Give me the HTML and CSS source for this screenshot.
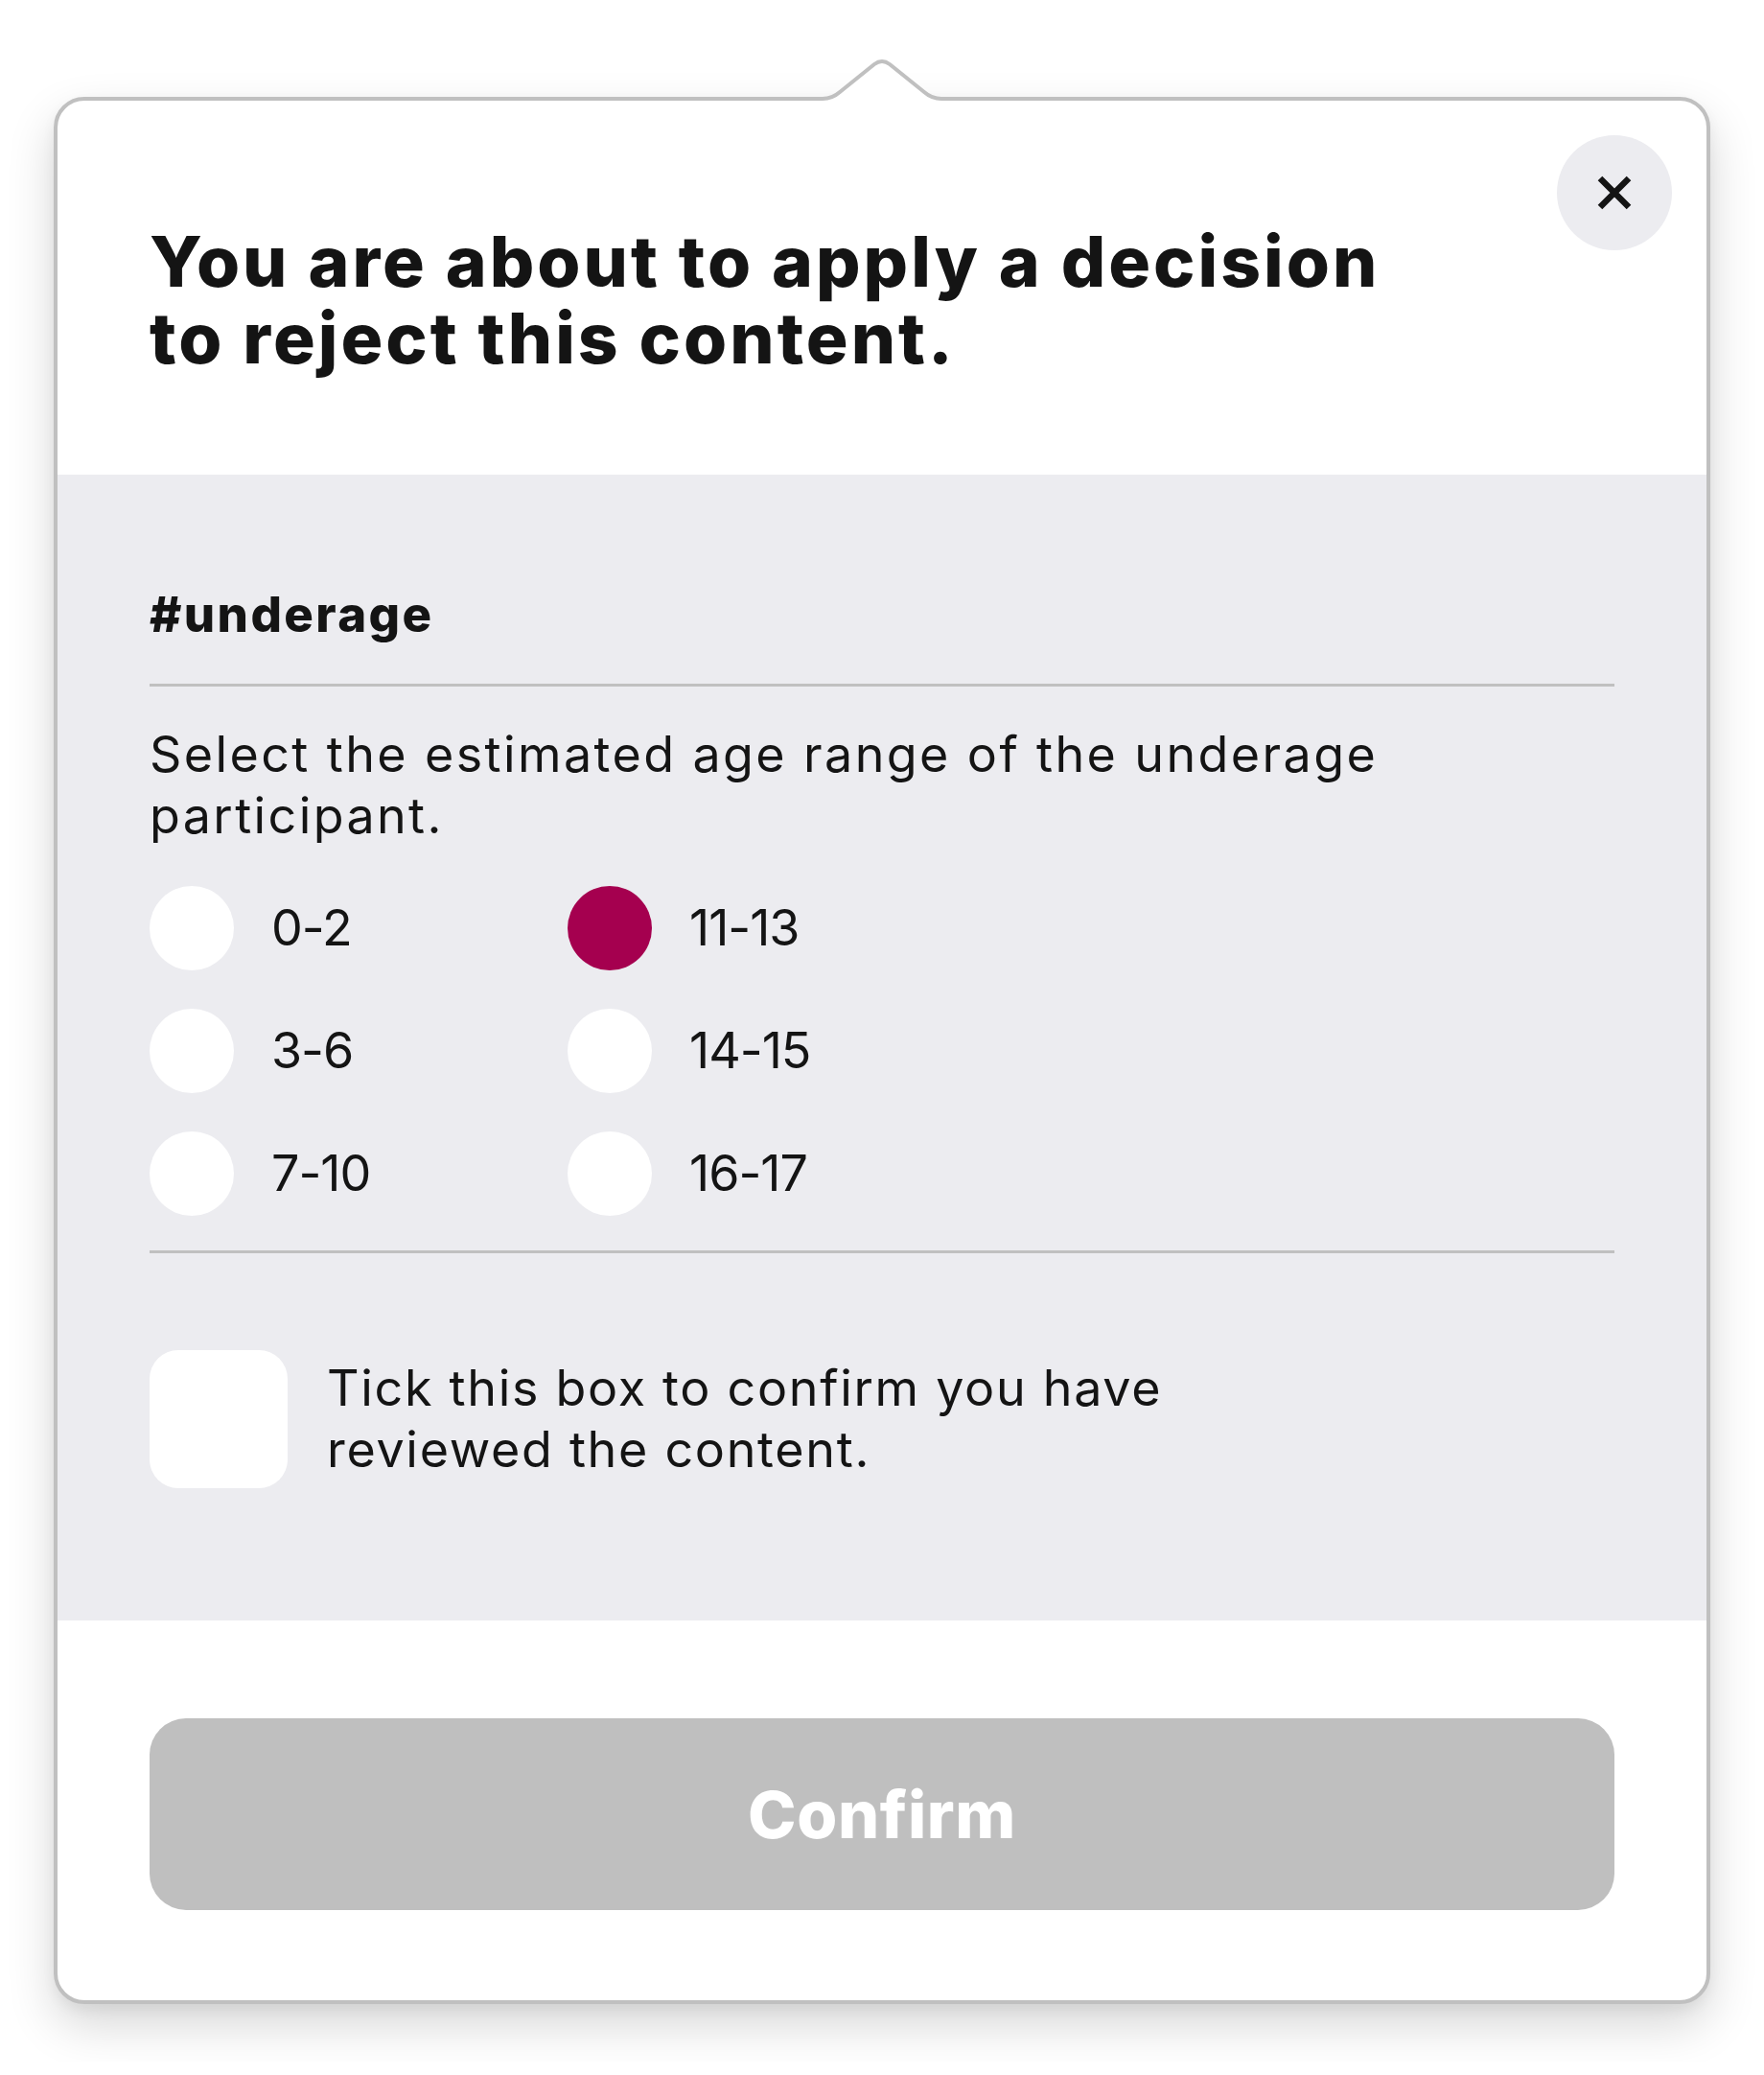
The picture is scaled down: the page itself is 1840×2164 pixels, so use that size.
FILE: index.html
```html
<!DOCTYPE html>
<html lang="en">
<head>
<meta charset="utf-8">
<title>Reject content</title>
<link rel="stylesheet" href="styles.css">
</head>
<body>
<div class="page">
  <div class="popover">
    <svg class="notch" width="140" height="50" viewBox="0 0 140 50" aria-hidden="true">
      <path class="notch-fill" d="M0 44 H8 Q18 44 26 37 L62 8 Q70 2 78 8 L114 37 Q122 44 132 44 H140 V50 H0 Z"/>
      <path class="notch-line" d="M0 44 H8 Q18 44 26 37 L62 8 Q70 2 78 8 L114 37 Q122 44 132 44 H140"/>
    </svg>
    <button class="close" type="button" aria-label="Close">
      <svg width="36" height="36" viewBox="0 0 36 36" aria-hidden="true">
        <path d="M3 3 L33 33 M33 3 L3 33"/>
      </svg>
    </button>

    <header class="head">
      <h1 class="title">You are about to apply a decision<br>to reject this content.</h1>
    </header>

    <section class="panel">
      <h2 class="tag">#underage</h2>
      <hr class="rule">
      <p class="prompt">Select the estimated age range of the underage participant.</p>
      <div class="options">
        <label class="option"><span class="dot"></span><span class="opt-text">0-2</span></label>
        <label class="option"><span class="dot"></span><span class="opt-text">3-6</span></label>
        <label class="option"><span class="dot"></span><span class="opt-text">7-10</span></label>
        <label class="option"><span class="dot dot-on"></span><span class="opt-text">11-13</span></label>
        <label class="option"><span class="dot"></span><span class="opt-text">14-15</span></label>
        <label class="option"><span class="dot"></span><span class="opt-text">16-17</span></label>
      </div>
      <hr class="rule rule-low">
      <label class="check">
        <span class="box"></span>
        <span class="check-text">Tick this box to confirm you have<br>reviewed the content.</span>
      </label>
    </section>

    <footer class="foot">
      <button class="confirm" type="button">Confirm</button>
    </footer>
  </div>
</div>
</body>
</html>
```

FILE: styles.css
```css
* {
  box-sizing: border-box;
}

html,
body {
  margin: 0;
  padding: 0;
  background: #ffffff;
}

body {
  font-family: "Inter", "Liberation Sans", sans-serif;
  color: #141414;
}

.page {
  padding: 101px 0 60px 56px;
}

.popover {
  position: relative;
  width: 1728px;
  background: #ffffff;
  border: 4px solid #c0c0c0;
  border-radius: 32px;
  box-shadow: 0 22px 50px rgba(0, 0, 0, 0.16), 0 6px 14px rgba(0, 0, 0, 0.05);
}

.notch {
  position: absolute;
  top: -46px;
  left: 50%;
  margin-left: -70px;
  display: block;
}

.notch-fill {
  fill: #ffffff;
}

.notch-line {
  fill: none;
  stroke: #c0c0c0;
  stroke-width: 4;
  stroke-linejoin: round;
}

.close {
  position: absolute;
  top: 36px;
  right: 36px;
  width: 120px;
  height: 120px;
  border: 0;
  padding: 0;
  border-radius: 50%;
  background: #ececf0;
  display: flex;
  align-items: center;
  justify-content: center;
  cursor: pointer;
}

.close svg {
  display: block;
}

.close path {
  fill: none;
  stroke: #141414;
  stroke-width: 6.5;
}

.head {
  padding: 128px 96px 102px;
  border-radius: 28px 28px 0 0;
}

.title {
  margin: 0;
  font-size: 73px;
  line-height: 80px;
  font-weight: 800;
  letter-spacing: 3px;
}

.panel {
  background: #ececf0;
  padding: 114px 96px 138px;
}

.tag {
  margin: 0;
  font-size: 51px;
  line-height: 64px;
  font-weight: 800;
  letter-spacing: 2.4px;
}

.rule {
  margin: 40px 0 0;
  border: 0;
  height: 3px;
  background: #c0c0c0;
}

.prompt {
  margin: 39px 0 0;
  max-width: 1400px;
  font-size: 52px;
  line-height: 64px;
  font-weight: 400;
  letter-spacing: 2.4px;
}

.options {
  margin-top: 41px;
  display: grid;
  grid-auto-flow: column;
  grid-template-rows: repeat(3, 88px);
  grid-template-columns: 436px 436px;
  row-gap: 40px;
}

.option {
  display: flex;
  align-items: center;
  gap: 39px;
}

.dot {
  width: 88px;
  height: 88px;
  border-radius: 50%;
  background: #ffffff;
  flex: none;
}

.dot-on {
  background: #a5004f;
}

.opt-text {
  font-size: 52px;
  line-height: 64px;
  letter-spacing: -1px;
}

.rule-low {
  margin-top: 36px;
}

.check {
  margin-top: 101px;
  display: flex;
  align-items: center;
  gap: 41px;
}

.box {
  width: 144px;
  height: 144px;
  border-radius: 30px;
  background: #ffffff;
  flex: none;
}

.check-text {
  font-size: 52px;
  line-height: 64px;
  letter-spacing: 1.7px;
}

.foot {
  padding: 102px 96px 94px;
}

.confirm {
  display: flex;
  align-items: center;
  justify-content: center;
  width: 100%;
  height: 200px;
  border: 0;
  border-radius: 38px;
  background: #bfbfbf;
  color: #ffffff;
  font-family: "Inter", "Liberation Sans", sans-serif;
  font-size: 68px;
  font-weight: 800;
  letter-spacing: 0.6px;
}
```
